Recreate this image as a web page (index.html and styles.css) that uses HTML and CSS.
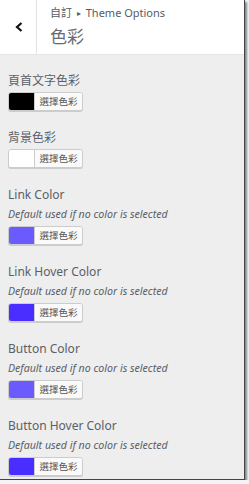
FILE: index.html
```html
<!DOCTYPE html>
<html lang="zh-Hant">
<head>
<meta charset="utf-8">
<link rel="stylesheet" href="styles.css">
</head>
<body>
<div class="panel">
  <header class="head">
    <button class="back" aria-label="返回">
      <svg width="8" height="10" viewBox="0 0 8 10"><path d="M6.5 1 L2 5 L6.5 9" fill="none" stroke="#111" stroke-width="2.2"/></svg>
    </button>
    <div class="titles">
      <div class="crumb">自訂 <span class="arrow">▸</span> Theme Options</div>
      <h1 class="title">色彩</h1>
    </div>
  </header>
  <div class="controls">
    <div class="control">
      <div class="label">頁首文字色彩</div>
      <div class="picker"><span class="swatch" style="background:#000000"></span><span class="pick">選擇色彩</span></div>
    </div>
    <div class="control">
      <div class="label">背景色彩</div>
      <div class="picker"><span class="swatch" style="background:#ffffff"></span><span class="pick">選擇色彩</span></div>
    </div>
    <div class="control">
      <div class="label">Link Color</div>
      <div class="desc">Default used if no color is selected</div>
      <div class="picker"><span class="swatch" style="background:#6b5bff"></span><span class="pick">選擇色彩</span></div>
    </div>
    <div class="control">
      <div class="label">Link Hover Color</div>
      <div class="desc">Default used if no color is selected</div>
      <div class="picker"><span class="swatch" style="background:#4a2dff"></span><span class="pick">選擇色彩</span></div>
    </div>
    <div class="control">
      <div class="label">Button Color</div>
      <div class="desc">Default used if no color is selected</div>
      <div class="picker"><span class="swatch" style="background:#6b5bff"></span><span class="pick">選擇色彩</span></div>
    </div>
    <div class="control">
      <div class="label">Button Hover Color</div>
      <div class="desc">Default used if no color is selected</div>
      <div class="picker"><span class="swatch" style="background:#4a2dff"></span><span class="pick">選擇色彩</span></div>
    </div>
  </div>
</div>
</body>
</html>
```
FILE: styles.css
```css
html, body {
  margin: 0;
  padding: 0;
  background: #f4f4f4;
}
body {
  font-family: "Noto Sans", "Noto Sans CJK TC", sans-serif;
  color: #5a6068;
}
.panel {
  width: 244px;
  height: 479px;
  background: #eeeeee;
  border-right: 1px solid #444;
  border-bottom: 1px solid #444;
  box-shadow: 2px 2px 2px rgba(0,0,0,0.45);
  overflow: hidden;
}
.head {
  display: flex;
  height: 54px;
  background: #fff;
  border-bottom: 1px solid #e6e6e6;
}
.back {
  width: 37px;
  border: 0;
  border-right: 1px solid #e2e2e2;
  background: #fff;
  padding: 0;
  display: flex;
  align-items: center;
  justify-content: center;
  padding-left: 2px;
}
.titles {
  padding: 5px 0 0 13px;
}
.crumb {
  font-size: 11px;
  line-height: 16px;
  color: #555d66;
}
.arrow {
  font-size: 8px;
  position: relative;
  top: -1px;
  margin: 0 2px;
}
.title {
  margin: 2px 0 0;
  font-size: 17px;
  line-height: 26px;
  font-weight: 400;
  color: #666c73;
}
.controls {
  padding: 17px 0 0 8px;
  display: flex;
  flex-direction: column;
  gap: 18px;
}
.label {
  font-size: 12px;
  line-height: 18px;
  margin-bottom: 2px;
}
.desc {
  font-size: 10.6px;
  line-height: 17px;
  font-style: italic;
  margin: 0 0 3px;
}
.picker {
  display: flex;
  width: 73px;
  height: 17px;
  border: 1px solid #cccccc;
  border-radius: 3px;
  overflow: hidden;
  box-shadow: 0 1px 0 #cccccc;
  background: #f7f7f7;
}
.swatch {
  width: 25px;
  border-right: 1px solid #cccccc;
}
.pick {
  flex: 1;
  font-size: 9.5px;
  line-height: 17px;
  text-align: center;
  color: #555;
  background: #fafafa;
}
```
